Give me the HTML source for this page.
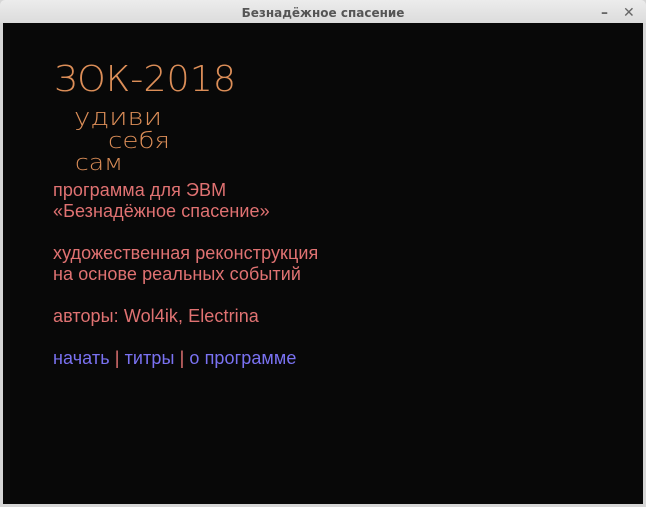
<!DOCTYPE html>
<html><head><meta charset="utf-8"><style>
*{margin:0;padding:0}
body{width:646px;height:507px;background:#d6d6d6;overflow:hidden;position:relative;font-family:"Liberation Sans",sans-serif}
.title{position:absolute;left:0;top:0;width:646px;height:23px;background:linear-gradient(#ececec,#dcdcdc);border-radius:5px 5px 0 0;text-align:center;font:bold 12px "DejaVu Sans",sans-serif;line-height:26px;color:#555}
.ctl{position:absolute;top:0;font:bold 14px "DejaVu Sans",sans-serif;color:#666;line-height:26px}
.main{position:absolute;left:3px;top:23px;width:640px;height:481px;background:#080808}
.txt{position:absolute;left:53px;top:180px;font-size:18px;line-height:21px;color:#e07272;white-space:pre;letter-spacing:0.08px}
.l{color:#7a72f2}
svg{position:absolute;left:0;top:0}
svg text{fill:#dc8e58}
</style></head><body>
<div class="title">Безнадёжное спасение</div>
<div class="ctl" style="left:601px">–</div>
<div class="ctl" style="left:623px">✕</div>
<div class="main"></div>
<svg width="646" height="507">
<g font-family="DejaVu Sans" font-weight="200">
<text x="54" y="91" font-size="36" textLength="182" lengthAdjust="spacingAndGlyphs">ЗОК-2018</text>
<text x="74" y="125" font-size="24" textLength="88" lengthAdjust="spacingAndGlyphs">удиви</text>
<text x="108" y="148" font-size="22" textLength="62" lengthAdjust="spacingAndGlyphs">себя</text>
<text x="75" y="170" font-size="22" textLength="48" lengthAdjust="spacingAndGlyphs">сам</text>
</g>
</svg>
<div class="txt">программа для ЭВМ
«Безнадёжное спасение»

художественная реконструкция
на основе реальных событий

авторы: Wol4ik, Electrina

<span class="l">начать</span> | <span class="l">титры</span> | <span class="l">о программе</span></div>
</body></html>
